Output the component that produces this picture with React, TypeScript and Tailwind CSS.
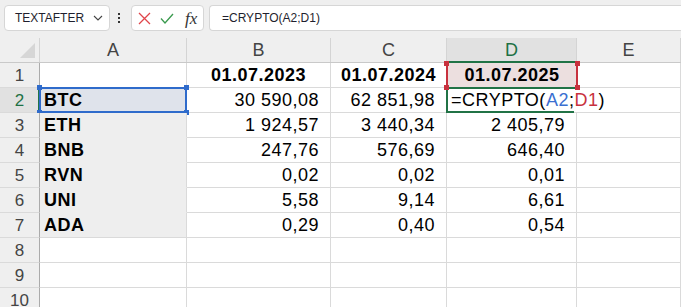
import React from 'react';

type RowData = { n: number; a?: string; b?: string; c?: string; d?: string };

const rows: RowData[] = [
  { n: 1, a: '', b: '01.07.2023', c: '01.07.2024', d: '01.07.2025' },
  { n: 2, a: 'BTC', b: '30 590,08', c: '62 851,98' },
  { n: 3, a: 'ETH', b: '1 924,57', c: '3 440,34', d: '2 405,79' },
  { n: 4, a: 'BNB', b: '247,76', c: '576,69', d: '646,40' },
  { n: 5, a: 'RVN', b: '0,02', c: '0,02', d: '0,01' },
  { n: 6, a: 'UNI', b: '5,58', c: '9,14', d: '6,61' },
  { n: 7, a: 'ADA', b: '0,29', c: '0,40', d: '0,54' },
  { n: 8 },
  { n: 9 },
  { n: 10 },
];

const cols = 'grid grid-cols-[40px_147px_144px_116px_130px_1fr]';

function Handle({ className }: { className: string }) {
  return <span className={`absolute w-[5px] h-[5px] ${className}`} />;
}

function Toolbar() {
  return (
    <div className="h-[31px] bg-[#efefef] flex items-start pt-[5px] pl-[4px] text-[12px] text-[#1f1f2e]">
      <div className="w-[106px] h-[26px] bg-white border border-[#d6d6d6] rounded-[4px] flex items-center justify-between pl-[10px] pr-[6px]">
        <span>TEXTAFTER</span>
        <svg width="10" height="6" viewBox="0 0 10 6" fill="none" stroke="#444" strokeWidth="1.1">
          <path d="M1 1l4 4 4-4" />
        </svg>
      </div>
      <div className="w-[21px] h-[26px] flex flex-col items-center justify-center gap-[2px] pr-[3px]">
        <span className="w-[2px] h-[2px] bg-[#333]" />
        <span className="w-[2px] h-[2px] bg-[#333]" />
        <span className="w-[2px] h-[2px] bg-[#333]" />
      </div>
      <div className="w-[73px] h-[26px] bg-white border border-[#d6d6d6] rounded-[4px] flex items-center pl-[6px] gap-[9px]">
        <svg width="13" height="13" viewBox="0 0 13 13" stroke="#e0454b" strokeWidth="1.3" fill="none">
          <path d="M1 1l11 11M12 1L1 12" />
        </svg>
        <svg width="14" height="11" viewBox="0 0 14 11" stroke="#3a9a4e" strokeWidth="1.3" fill="none">
          <path d="M1 5.5l4 4.5L13 1" />
        </svg>
        <span className="font-['Liberation_Serif',serif] italic text-[17px] text-[#333] leading-none ml-[2px]">fx</span>
      </div>
      <div className="flex-1 ml-[5px] h-[26px] bg-white border border-r-0 border-[#d6d6d6] rounded-l-[4px] flex items-center pl-[12px]">
        =CRYPTO(A2;D1)
      </div>
    </div>
  );
}

function Header() {
  const letters = ['A', 'B', 'C', 'D', 'E'];
  return (
    <div className={`${cols} h-[25px] bg-[#efefef] border-b border-[#c9c9c9] text-[18px] text-[#444]`}>
      <div className="relative border-r border-[#d4d4d4]">
        <svg className="absolute right-[4px] bottom-[4px]" width="15" height="15" viewBox="0 0 15 15">
          <polygon points="15,0 15,15 0,15" fill="#d6d6d6" />
        </svg>
      </div>
      {letters.map((l) =>
        l === 'D' ? (
          <div
            key={l}
            className="relative bg-[#e1e1e1] border-r border-[#d4d4d4] flex items-center justify-center text-[#1e7145]"
          >
            {l}
            <span className="absolute left-0 right-0 -bottom-[1px] h-[2px] bg-[#217346]" />
          </div>
        ) : (
          <div key={l} className="border-r border-[#d4d4d4] flex items-center justify-center">
            {l}
          </div>
        )
      )}
    </div>
  );
}

function Row({ r }: { r: RowData }) {
  const first = r.n === 1;
  const active = r.n === 2;
  const filledA = r.n >= 3 && r.n <= 7;
  const num = 'flex items-center justify-end pr-[11px]';
  const date = 'flex items-center justify-center font-bold';
  return (
    <div className={`${cols} h-[25px] text-[18px] text-black`}>
      <div
        className={`relative flex items-center justify-center text-[17px] border-b border-[#dadada] border-r border-r-[#ababab] ${
          active ? 'bg-[#e1e1e1] text-[#1e7145]' : 'bg-[#efefef] text-[#444]'
        }`}
      >
        {r.n}
        {active && <span className="absolute right-[-1px] top-0 bottom-[-1px] w-[2px] bg-[#217346]" />}
      </div>

      <div
        className={`relative flex items-center pl-[4px] font-bold tracking-[0.5px] border-r border-[#dadada] ${
          active
            ? 'bg-[#dfe3eb] border-b border-b-[#dadada]'
            : filledA
            ? `bg-[#eeeeee] border-b ${r.n === 7 ? 'border-b-[#dadada]' : 'border-b-[#eeeeee]'} border-r-[#dadada]`
            : 'border-b'
        }`}
      >
        {r.a}
        {active && (
          <>
            <span className="absolute -left-[1px] -top-[1px] -right-[1px] -bottom-[1px] border-2 border-[#2f6bcb]" />
            <Handle className="-left-[3px] -top-[3px] bg-[#2f6bcb]" />
            <Handle className="-right-[3px] -top-[3px] bg-[#2f6bcb]" />
            <Handle className="-right-[3px] -bottom-[3px] bg-[#2f6bcb]" />
            <Handle className="-left-[3px] -bottom-[3px] bg-[#2f6bcb]" />
          </>
        )}
      </div>

      <div className={`border-r border-b border-[#dadada] tracking-[0.5px] ${first ? date : num}`}>{r.b}</div>
      <div className={`border-r border-b border-[#dadada] tracking-[0.5px] ${first ? date : num}`}>{r.c}</div>

      {first ? (
        <div className={`relative bg-[#ecdfdf] border-b border-[#dadada] tracking-[0.5px] ${date}`}>
          {r.d}
          <span className="absolute -left-[1px] top-0 bottom-0 w-[2px] bg-[#c8313e]" />
          <span className="absolute -right-[1px] top-0 bottom-0 w-[2px] bg-[#c8313e]" />
          <Handle className="-left-[3px] -top-[2px] bg-[#c8313e]" />
          <Handle className="-right-[3px] -top-[2px] bg-[#c8313e]" />
          <Handle className="-left-[3px] -bottom-[3px] bg-[#c8313e] z-10" />
          <Handle className="-right-[3px] -bottom-[3px] bg-[#c8313e] z-10" />
        </div>
      ) : active ? (
        <div className="relative z-[5] border-b border-[#dadada] bg-white flex items-center pl-[4px] whitespace-nowrap tracking-[0.5px]">
          <span className="absolute -left-[1px] -top-[1px] right-0 h-[2px] bg-[#217346]" />
          <span className="absolute -left-[1px] -bottom-[1px] right-[3px] h-[2px] bg-[#217346]" />
          <span className="absolute -left-[1px] -top-[1px] -bottom-[1px] w-[2px] bg-[#217346]" />
          <span className="relative bg-white pr-[2px]">
            =CRYPTO(<span className="text-[#3a6fd1]">A2</span>;<span className="text-[#c8313e]">D1</span>)
          </span>
        </div>
      ) : (
        <div className={`border-r border-b border-[#dadada] tracking-[0.5px] ${num}`}>{r.d}</div>
      )}

      <div className="border-r border-b border-[#dadada]" />
    </div>
  );
}

export default function App() {
  return (
    <div className="w-[681px] h-[307px] overflow-hidden bg-white font-['Liberation_Sans',Arial,sans-serif] leading-none">
      <Toolbar />
      <div className="h-[7px] bg-[#efefef]" />
      <Header />
      {rows.map((r) => (
        <Row key={r.n} r={r} />
      ))}
    </div>
  );
}
